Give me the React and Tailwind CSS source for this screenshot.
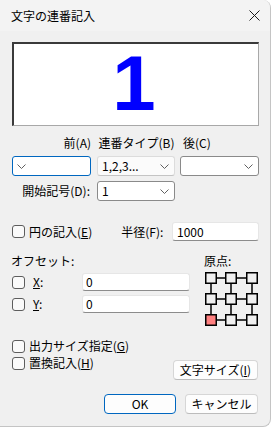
import React from 'react';

const Chevron = () => (
  <svg width="9" height="5" viewBox="0 0 9 5" className="shrink-0">
    <polyline points="0.5,0.5 4.5,4.5 8.5,0.5" fill="none" stroke="#606060" strokeWidth="1" />
  </svg>
);

const CheckBox = () => (
  <div className="w-[13px] h-[13px] shrink-0 rounded-[3px] border border-[#5d5d5d] bg-[#fafafa]" />
);

const Combo = ({ value, className = '', chevronLeft = false }) => (
  <div className={`h-[20px] flex items-center rounded-[3px] ${className}`}>
    {chevronLeft ? (
      <div className="pl-[4px] flex items-center">
        <Chevron />
      </div>
    ) : (
      <>
        <span className="flex-1 pl-[4px] leading-none">{value}</span>
        <div className="pr-[5px] flex items-center">
          <Chevron />
        </div>
      </>
    )}
  </div>
);

const TextBox = ({ value, className = '' }) => (
  <div
    className={`flex items-center bg-white rounded-[3px] border border-[#e6e6e6] border-b-[#8c8c8c] ${className}`}
  >
    <span className="leading-none">{value}</span>
  </div>
);

const OriginGrid = () => {
  const xs = [0, 20, 41];
  const ys = [0, 21, 42];
  return (
    <svg width="54" height="55" viewBox="0 0 54 55">
      {ys.map((y) => (
        <line key={'h' + y} x1="6" y1={y + 6} x2="47" y2={y + 6} stroke="#000" strokeWidth="1.5" />
      ))}
      {xs.map((x) => (
        <line key={'v' + x} x1={x + 6} y1="6" x2={x + 6} y2="48" stroke="#000" strokeWidth="1.5" />
      ))}
      {ys.map((y, r) =>
        xs.map((x, c) => (
          <rect
            key={r + '-' + c}
            x={x + 0.75}
            y={y + 0.75}
            width="10.5"
            height="10.5"
            fill={r === 2 && c === 0 ? '#ff8080' : '#f0f0f0'}
            stroke="#000"
            strokeWidth="1.5"
          />
        ))
      )}
    </svg>
  );
};

export default function App() {
  return (
    <div
      className="w-[271px] h-[427px] bg-[#f0f0f0] border-r border-b border-[#c4c4c4] rounded-tr-[8px] rounded-br-[8px] overflow-hidden text-[12px] text-black"
      style={{ fontFamily: '"Noto Sans CJK JP", "Noto Sans", sans-serif' }}
    >
      {/* Title bar */}
      <div className="h-[31px] bg-[#f3f3f3] flex items-center justify-between pl-[11px] pr-[10px]">
        <span className="leading-none">文字の連番記入</span>
        <svg width="11" height="11" viewBox="0 0 11 11">
          <path d="M0.5 0.5 L10.5 10.5 M10.5 0.5 L0.5 10.5" stroke="#1b1b1b" strokeWidth="1" />
        </svg>
      </div>

      <div className="pl-[12px] pr-[11px]">
        {/* Preview */}
        <div className="mt-[11px] h-[84px] bg-white border-t-2 border-l-2 border-[#3a3a3a] border-r border-b border-r-[#a8a8a8] border-b-[#a8a8a8] flex items-center justify-center">
          <span
            className="text-[78px] font-bold text-[#0000ff] leading-none -mt-[4px] -ml-[4px]"
            style={{ fontFamily: '"Liberation Sans", Arial, sans-serif' }}
          >
            1
          </span>
        </div>

        {/* Labels */}
        <div className="mt-[9px] h-[16px] grid grid-cols-[79px_78px_79px] gap-x-[6px] items-center">
          <span className="text-right leading-none">前(A)</span>
          <span className="text-center leading-none pl-[1px]">連番タイプ(B)</span>
          <span className="leading-none pl-[2px]">後(C)</span>
        </div>

        {/* Combos */}
        <div className="mt-[5px] flex">
          <Combo chevronLeft className="w-[79px] bg-white border border-[#0067c0]" />
          <Combo value="1,2,3..." className="ml-[6px] w-[78px] bg-[#fbfbfb] border border-[#dcdcdc] border-b-[#c4c4c4]" />
          <Combo className="ml-[5px] w-[79px] bg-white border border-[#8a8a8a]" />
        </div>

        {/* Start symbol */}
        <div className="mt-[5px] flex items-center">
          <span className="w-[78px] text-right leading-none">開始記号(D):</span>
          <Combo value="1" className="ml-[7px] w-[78px] bg-white border border-[#8a8a8a]" />
        </div>

        {/* Circle */}
        <div className="mt-[21px] h-[19px] flex items-center">
          <CheckBox />
          <span className="ml-[4px] leading-none">
            円の記入(<span className="underline">E</span>)
          </span>
          <span className="ml-[29px] leading-none">半径(F):</span>
          <TextBox value="1000" className="ml-auto w-[87px] h-[19px] pl-[4px]" />
        </div>

        {/* Offset + origin */}
        <div className="mt-[12px] flex">
          <div className="flex flex-col">
            <span className="h-[16px] leading-[16px] -ml-[1px]">オフセット:</span>
            <div className="mt-[4px] flex items-center h-[18px]">
              <CheckBox />
              <span className="ml-[8px] w-[49px] leading-none">
                <span className="underline">X</span>:
              </span>
              <TextBox value="0" className="w-[108px] h-[18px] pl-[3px]" />
            </div>
            <div className="mt-[4px] flex items-center h-[18px]">
              <CheckBox />
              <span className="ml-[8px] w-[49px] leading-none">
                <span className="underline">Y</span>:
              </span>
              <TextBox value="0" className="w-[108px] h-[18px] pl-[3px]" />
            </div>
          </div>
          <div className="ml-auto flex flex-col w-[54px]">
            <span className="h-[16px] leading-[16px] -ml-[1px]">原点:</span>
            <div className="mt-[3px]">
              <OriginGrid />
            </div>
          </div>
        </div>

        {/* Bottom checks + size button */}
        <div className="mt-[11px] flex">
          <div className="flex flex-col gap-[1px]">
            <div className="h-[16px] flex items-center">
              <CheckBox />
              <span className="ml-[4px] leading-none">
                出力サイズ指定(<span className="underline">G</span>)
              </span>
            </div>
            <div className="h-[16px] flex items-center">
              <CheckBox />
              <span className="ml-[4px] leading-none">
                置換記入(<span className="underline">H</span>)
              </span>
            </div>
          </div>
          <button className="ml-auto mr-[1px] mt-[22px] w-[85px] h-[20px] rounded-[4px] bg-[#fdfdfd] border border-[#d6d6d6] border-b-[#bcbcbc] flex items-center justify-center leading-none">
            文字サイズ(<span className="underline">I</span>)
          </button>
        </div>

        {/* OK / Cancel */}
        <div className="mt-[14px] flex justify-end mr-[1px] gap-[9px]">
          <button className="w-[72px] h-[20px] rounded-[4px] bg-[#fdfdfd] border border-[#0067c0] flex items-center justify-center leading-none">
            OK
          </button>
          <button className="w-[73px] h-[20px] rounded-[4px] bg-[#fdfdfd] border border-[#d6d6d6] border-b-[#bcbcbc] flex items-center justify-center leading-none">
            キャンセル
          </button>
        </div>
      </div>
    </div>
  );
}
